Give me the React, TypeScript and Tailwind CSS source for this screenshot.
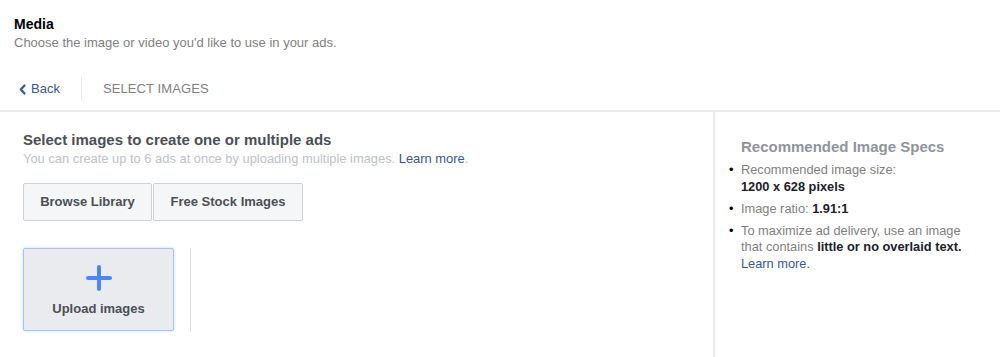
import React from "react";

export default function App() {
  return (
    <div className="w-[1000px] h-[357px] bg-white overflow-hidden text-[#1d2129]" style={{ fontFamily: '"Liberation Sans", Arial, Helvetica, sans-serif' }}>
      <div className="pl-[14px] pt-[15px]">
        <div className="text-[14px] font-bold leading-[18px] text-black">Media</div>
        <div className="text-[13px] leading-[17px] mt-[1px] text-[#7f7f7f]">Choose the image or video you'd like to use in your ads.</div>
      </div>
      <div className="flex items-center h-[34px] mt-[21px] pl-[19px]">
        <div className="flex items-center gap-[5px] text-[#365899] text-[13px]">
          <svg width="7" height="11" viewBox="0 0 7 11" className="mt-[1px]">
            <path d="M5.5 1.5 L1.8 5.5 L5.5 9.5" fill="none" stroke="#365899" strokeWidth="2.2" strokeLinecap="round" strokeLinejoin="round" />
          </svg>
          <span>Back</span>
        </div>
        <div className="w-px h-[24px] bg-[#e9eaed] ml-[21px]" />
        <div className="ml-[21px] text-[13px] text-[#7f7f7f] tracking-[0.1px]">SELECT IMAGES</div>
      </div>
      <div className="h-[4px]" />
      <div className="flex border-t-[2px] border-[#e9eaed] h-[253px]">
        <div className="w-[713px] pl-[23px] pt-[18px]">
          <div className="text-[15px] font-bold leading-[20px] text-[#4b4f56]">Select images to create one or multiple ads</div>
          <div className="text-[12.9px] leading-[16px] mt-[1px] text-[#bec2c9]">
            You can create up to 6 ads at once by uploading multiple images. <span className="text-[#365899]">Learn more</span>.
          </div>
          <div className="flex mt-[16px]">
            <div className="w-[129px] h-[38px] flex items-center justify-center bg-[#f5f6f7] border border-[#ced0d4] rounded-[2px] text-[13px] font-bold text-[#4b4f56]">Browse Library</div>
            <div className="w-[150px] h-[38px] ml-px flex items-center justify-center bg-[#f5f6f7] border border-[#ced0d4] rounded-[2px] text-[13px] font-bold text-[#4b4f56]">Free Stock Images</div>
          </div>
          <div className="flex mt-[27px]">
            <div className="w-[151px] h-[83px] bg-[#e9ebee] border border-[#a9c3f5] rounded-[2px] shadow-[0_0_3px_#bdd2fb] flex flex-col items-center">
              <svg width="28" height="28" viewBox="0 0 28 28" className="mt-[15px]">
                <path d="M14 3 V25 M3 14 H25" stroke="#4a86f5" strokeWidth="4" strokeLinecap="round" />
              </svg>
              <div className="text-[13px] font-bold text-[#4b4f56] mt-[7px]">Upload images</div>
            </div>
            <div className="w-px h-[84px] bg-[#dddfe2] ml-[16px]" />
          </div>
        </div>
        <div className="w-[2px] bg-[#e9eaed]" />
        <div className="flex-1 pl-[26px] pt-[26px]">
          <div className="text-[15px] font-bold leading-[18px] text-[#90949c]">Recommended Image Specs</div>
          <ul className="mt-[6px] text-[12.8px] leading-[16.5px] text-[#7f7f7f]">
            <li className="flex">
              <span className="w-0 relative -left-[12px] text-black">•</span>
              <span>Recommended image size:<br /><b className="text-[#1d2129]">1200 x 628 pixels</b></span>
            </li>
            <li className="flex mt-[6px]">
              <span className="w-0 relative -left-[12px] text-black">•</span>
              <span>Image ratio: <b className="text-[#1d2129]">1.91:1</b></span>
            </li>
            <li className="flex mt-[5px]">
              <span className="w-0 relative -left-[12px] text-black">•</span>
              <span>To maximize ad delivery, use an image<br />that contains <b className="text-[#1d2129]">little or no overlaid text.</b><br /><span className="text-[#365899]">Learn more.</span></span>
            </li>
          </ul>
        </div>
      </div>
    </div>
  );
}
